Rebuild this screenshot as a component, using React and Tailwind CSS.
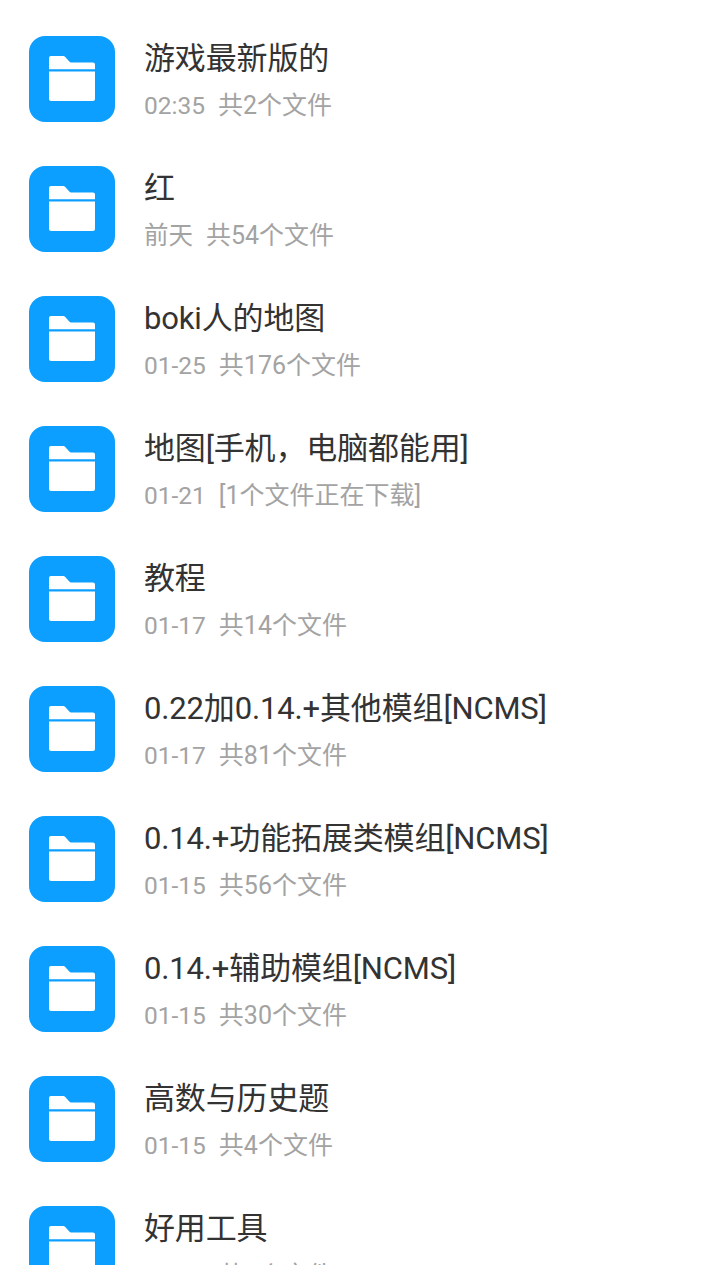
const folders = [
  { name: '游戏最新版的', date: '02:35', info: '共2个文件' },
  { name: '红', date: '前天', info: '共54个文件' },
  { name: 'boki人的地图', date: '01-25', info: '共176个文件' },
  { name: '地图[手机，电脑都能用]', date: '01-21', info: '[1个文件正在下载]' },
  { name: '教程', date: '01-17', info: '共14个文件' },
  { name: '0.22加0.14.+其他模组[NCMS]', date: '01-17', info: '共81个文件' },
  { name: '0.14.+功能拓展类模组[NCMS]', date: '01-15', info: '共56个文件' },
  { name: '0.14.+辅助模组[NCMS]', date: '01-15', info: '共30个文件' },
  { name: '高数与历史题', date: '01-15', info: '共4个文件' },
  { name: '好用工具', date: '01-15', info: '共1个文件' },
];

const FolderIcon = () => (
  <div className="w-[86px] h-[86px] shrink-0 rounded-[16px] bg-[#0d9fff] flex items-center justify-center">
    <svg width="46" height="46" viewBox="0 0 46 46" fill="none">
      <path d="M0 2a2 2 0 0 1 2-2h12.500a2 2 0 0 1 1.500.7L20.500 5.800a2 2 0 0 0 1.500.7H44a2 2 0 0 1 2 2v4.700H0z" fill="#fff" />
      <path d="M0 15.500h46V43a2 2 0 0 1-2 2H2a2 2 0 0 1-2-2z" fill="#fff" />
    </svg>
  </div>
);

const Row = ({ item }) => (
  <div className="h-[130px] shrink-0 flex items-center pl-[29px]">
    <FolderIcon />
    <div className="ml-[29px] pt-[2px] flex flex-col">
      <div className="text-[31px] leading-[40px] tracking-[-0.15px] text-[#333333] whitespace-nowrap">{item.name}</div>
      <div className="mt-[11px] text-[24.5px] leading-[32px] text-[#a3a3a3] whitespace-nowrap">
        <span>{item.date}</span>
        <span className="ml-[13px] text-[25px]">{item.info}</span>
      </div>
    </div>
  </div>
);

export default function App() {
  return (
    <div className="w-[720px] h-[1265px] overflow-hidden bg-white font-['Roboto','Noto_Sans_CJK_SC',sans-serif] flex flex-col pt-[14px]">
      {folders.map((item) => (
        <Row key={item.name} item={item} />
      ))}
    </div>
  );
}
